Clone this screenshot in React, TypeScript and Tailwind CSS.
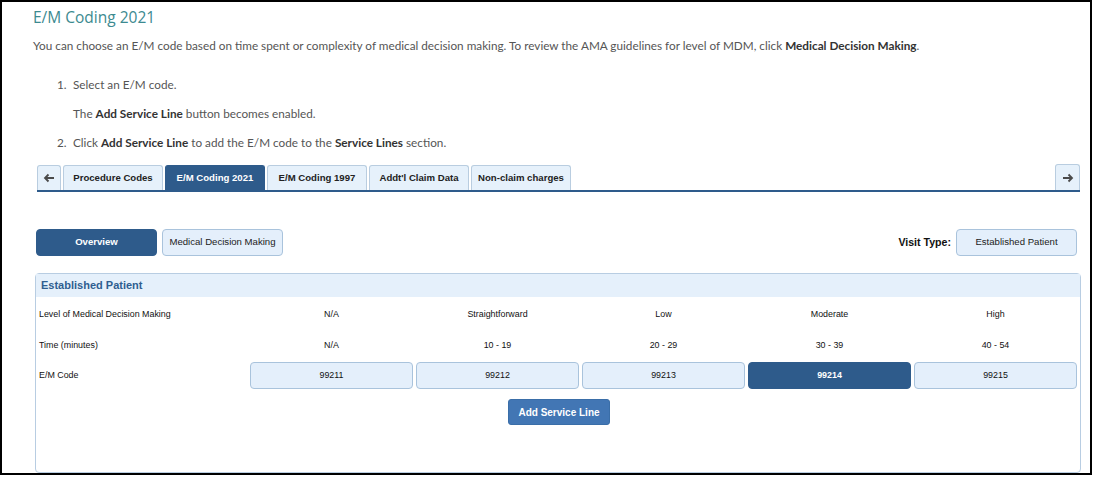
import React, { useState } from 'react';

const levels = [
  { mdm: 'N/A', time: 'N/A', code: '99211' },
  { mdm: 'Straightforward', time: '10 - 19', code: '99212' },
  { mdm: 'Low', time: '20 - 29', code: '99213' },
  { mdm: 'Moderate', time: '30 - 39', code: '99214' },
  { mdm: 'High', time: '40 - 54', code: '99215' },
];

const tabs = ['Procedure Codes', 'E/M Coding 2021', 'E/M Coding 1997', "Addt'l Claim Data", 'Non-claim charges'];

const ArrowIcon: React.FC<{ dir: 'left' | 'right' }> = ({ dir }) => (
  <svg width="12" height="10" viewBox="0 0 12 10" className={dir === 'right' ? '' : 'rotate-180'}>
    <path d="M1 5h8.5M6.5 1.5 10 5 6.5 8.5" fill="none" stroke="#4a4a4a" strokeWidth="1.8" />
  </svg>
);

const App: React.FC = () => {
  const [activeTab, setActiveTab] = useState('E/M Coding 2021');
  const [selectedCode, setSelectedCode] = useState('99214');
  const [view, setView] = useState<'overview' | 'mdm'>('overview');

  return (
    <div className="h-[477px] w-[1093px] overflow-hidden bg-white">
      <div className="flex h-[475px] w-[1092px] flex-col border-2 border-black pl-[31px] pr-[9px] font-['Liberation_Sans',Arial,sans-serif]">
        <h1 className="mt-[5px] font-['Open_Sans',sans-serif] text-[15.5px] leading-[20px] text-[#3c8a90]">E/M Coding 2021</h1>

        <p className="mt-[11px] font-['Lato',sans-serif] text-[11.75px] leading-[16px] text-[#555]">
          You can choose an E/M code based on time spent or complexity of medical decision making. To review the AMA guidelines for level of MDM, click{' '}
          <b className="text-[#333]">Medical Decision Making</b>.
        </p>

        <ol className="mt-[23px] flex flex-col font-['Lato',sans-serif] text-[11.75px] leading-[16px] text-[#555]">
          <li className="flex">
            <span className="w-[40px] pl-[24px]">1.</span>
            <span>Select an E/M code.</span>
          </li>
          <li className="mt-[13px] pl-[40px]">
            The <b className="text-[#333]">Add Service Line</b> button becomes enabled.
          </li>
          <li className="mt-[13px] flex">
            <span className="w-[40px] pl-[24px]">2.</span>
            <span>
              Click <b className="text-[#333]">Add Service Line</b> to add the E/M code to the <b className="text-[#333]">Service Lines</b> section.
            </span>
          </li>
        </ol>

        <div className="mt-[14px] ml-[4px] mr-[1px] flex h-[27px] items-end border-b-2 border-[#2e5b8b]">
          <button className="mr-[2px] flex h-[25px] w-[24px] items-center justify-center rounded-t-[3px] border border-b-0 border-[#b9cde0] bg-[#e6f1fb]">
            <ArrowIcon dir="left" />
          </button>
          {tabs.map((t) => (
            <button
              key={t}
              onClick={() => setActiveTab(t)}
              className={
                'mr-[2px] h-[25px] w-[100px] rounded-t-[3px] border border-b-0 text-[9.6px] font-bold ' +
                (activeTab === t ? 'border-[#2e5b8b] bg-[#2e5b8b] text-white' : 'border-[#b9cde0] bg-[#e6f1fb] text-[#222]')
              }
            >
              {t}
            </button>
          ))}
          <div className="flex-1" />
          <button className="flex h-[26px] w-[25px] items-center justify-center rounded-t-[3px] border border-b-0 border-[#b9cde0] bg-[#e6f1fb]">
            <ArrowIcon dir="right" />
          </button>
        </div>

        <div className="mt-[37px] ml-[3px] mr-[4px] flex h-[27px] items-center">
          <button
            onClick={() => setView('overview')}
            className={
              'h-[27px] w-[121px] rounded-[4px] border text-[9.6px] ' +
              (view === 'overview' ? 'border-[#2e5b8b] bg-[#2e5b8b] font-bold text-white' : 'border-[#a9c3dc] bg-[#e4effb] text-[#222]')
            }
          >
            Overview
          </button>
          <button
            onClick={() => setView('mdm')}
            className={
              'ml-[5px] h-[27px] w-[121px] rounded-[4px] border text-[9.6px] ' +
              (view === 'mdm' ? 'border-[#2e5b8b] bg-[#2e5b8b] font-bold text-white' : 'border-[#a9c3dc] bg-[#e4effb] text-[#222]')
            }
          >
            Medical Decision Making
          </button>
          <div className="flex-1" />
          <span className="mr-[5px] text-[10.6px] font-bold text-[#111]">Visit Type:</span>
          <button className="h-[27px] w-[121px] rounded-[4px] border border-[#a9c3dc] bg-[#e4effb] text-[9.6px] text-[#222]">
            Established Patient
          </button>
        </div>

        <div className="mt-[17px] ml-[2px] flex h-[200px] flex-col rounded-[4px] border border-[#b8cde2]">
          <div className="flex h-[23px] items-center bg-[#e5f0fb] pl-[5px] text-[11px] font-bold text-[#2f5e90]">
            Established Patient
          </div>

          <div className="mt-[2px] flex h-[31px] items-center text-[8.9px] text-[#111]">
            <div className="w-[214px] pl-[3px]">Level of Medical Decision Making</div>
            <div className="grid flex-1 grid-cols-5 gap-[3px] pr-[3px]">
              {levels.map((l) => (
                <div key={l.code} className="text-center">
                  {l.mdm}
                </div>
              ))}
            </div>
          </div>

          <div className="flex h-[31px] items-center text-[8.9px] text-[#111]">
            <div className="w-[214px] pl-[3px]">Time (minutes)</div>
            <div className="grid flex-1 grid-cols-5 gap-[3px] pr-[3px]">
              {levels.map((l) => (
                <div key={l.code} className="text-center">
                  {l.time}
                </div>
              ))}
            </div>
          </div>

          <div className="flex h-[29px] items-center text-[8.9px] text-[#111]">
            <div className="w-[214px] pl-[3px]">E/M Code</div>
            <div className="grid flex-1 grid-cols-5 gap-[3px] pr-[3px]">
              {levels.map((l) => (
                <button
                  key={l.code}
                  onClick={() => setSelectedCode(l.code)}
                  className={
                    'h-[27px] rounded-[4px] border text-[8.9px] ' +
                    (selectedCode === l.code
                      ? 'border-[#2e5b8b] bg-[#2e5b8b] font-bold text-white'
                      : 'border-[#a9c3dc] bg-[#e4effb] text-[#111]')
                  }
                >
                  {l.code}
                </button>
              ))}
            </div>
          </div>

          <div className="mt-[9px] flex justify-center pl-[2px]">
            <button className="h-[26px] w-[102px] rounded-[3px] border border-[#3a6ea8] bg-[#4276b4] text-[10px] font-bold text-white">
              Add Service Line
            </button>
          </div>
        </div>
      </div>
    </div>
  );
};

export default App;
